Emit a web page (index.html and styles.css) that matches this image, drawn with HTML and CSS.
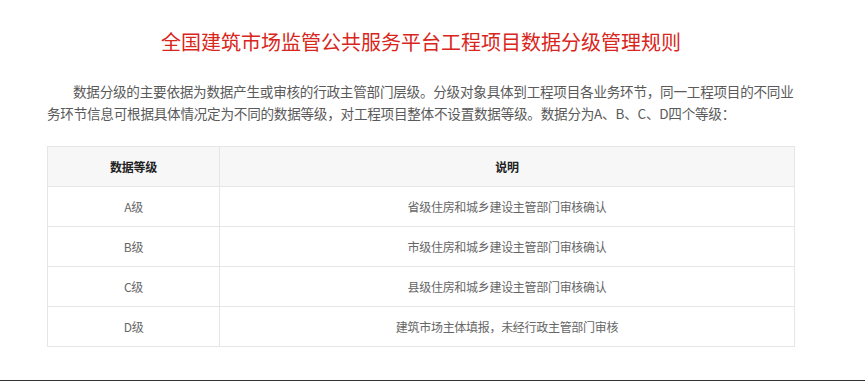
FILE: index.html
```html
<!DOCTYPE html>
<html lang="zh-CN">
<head>
<meta charset="utf-8">
<title>全国建筑市场监管公共服务平台工程项目数据分级管理规则</title>
<link rel="stylesheet" href="styles.css">
</head>
<body>
<div class="page">
  <div class="content">
    <h1 class="title">全国建筑市场监管公共服务平台工程项目数据分级管理规则</h1>
    <p class="intro">数据分级的主要依据为数据产生或审核的行政主管部门层级。分级对象具体到工程项目各业务环节，同一工程项目的不同业务环节信息可根据具体情况定为不同的数据等级，对工程项目整体不设置数据等级。数据分为A、B、C、D四个等级：</p>
    <table class="grade-table">
      <thead>
        <tr><th class="col-grade">数据等级</th><th>说明</th></tr>
      </thead>
      <tbody>
        <tr><td>A级</td><td>省级住房和城乡建设主管部门审核确认</td></tr>
        <tr><td>B级</td><td>市级住房和城乡建设主管部门审核确认</td></tr>
        <tr><td>C级</td><td>县级住房和城乡建设主管部门审核确认</td></tr>
        <tr><td>D级</td><td>建筑市场主体填报，未经行政主管部门审核</td></tr>
      </tbody>
    </table>
  </div>
  <div class="bottom-rule"></div>
</div>
</body>
</html>
```

FILE: styles.css
```css
html, body {
  margin: 0;
  padding: 0;
  background: #ffffff;
}

body {
  font-family: "Noto Sans CJK SC", "Microsoft YaHei", sans-serif;
  height: 381px;
  overflow: hidden;
}

.page {
  width: 865px;
}

.content {
  width: 748px;
  margin-left: 47px;
  padding-top: 27px;
  padding-bottom: 33px;
}

.title {
  margin: 0;
  font-size: 20px;
  line-height: 30px;
  font-weight: normal;
  color: #d9261c;
  text-align: center;
  letter-spacing: 0;
}

.intro {
  margin: 23px -4px 22px 0;
  font-size: 13.6px;
  line-height: 22px;
  color: #5a5a5a;
  text-indent: 26px;
  letter-spacing: -0.25px;
}

.grade-table {
  width: 748px;
  border-collapse: collapse;
  table-layout: fixed;
  font-size: 12px;
  letter-spacing: -0.3px;
}

.grade-table th,
.grade-table td {
  border: 1px solid #e6e6e8;
  height: 39px;
  padding: 0;
  text-align: center;
  vertical-align: middle;
  line-height: 16px;
}

.grade-table th {
  background: #f7f7f7;
  color: #222222;
  font-weight: bold;
}

.grade-table td {
  color: #666666;
}

.grade-table .col-grade {
  width: 171px;
}

.bottom-rule {
  height: 1px;
  background: #333333;
}
```
